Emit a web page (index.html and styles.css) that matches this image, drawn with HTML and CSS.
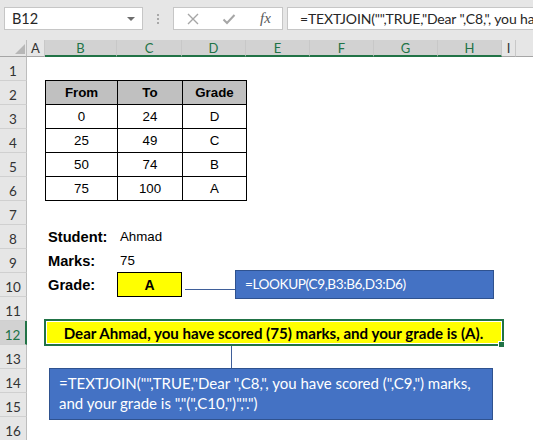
FILE: index.html
```html
<!DOCTYPE html>
<html>
<head>
<meta charset="utf-8">
<link rel="stylesheet" href="styles.css">
</head>
<body>
<div class="app">
  <div class="topbar">
    <div class="namebox"><span class="nb-text">B12</span><span class="nb-arrow"></span></div>
    <div class="sep"><span></span><span></span><span></span></div>
    <div class="fxbox">
      <svg class="ico" width="14" height="14" viewBox="0 0 14 14"><path d="M2 2 L12 12 M12 2 L2 12" stroke="#a6a6a6" stroke-width="1.4" fill="none"/></svg>
      <svg class="ico" width="14" height="14" viewBox="0 0 14 14"><path d="M1.5 7.5 L5 11 L12.5 3" stroke="#a6a6a6" stroke-width="2" fill="none"/></svg>
      <span class="fx">fx</span>
    </div>
    <div class="formula">=TEXTJOIN("",TRUE,"Dear ",C8,", you have scored (",C9,") marks, and your grade is ","(",C10,")",".")</div>
  </div>

  <div class="colheads">
    <div class="ch corner"><svg class="tri" width="10" height="10" viewBox="0 0 10 10"><polygon points="10,0 10,10 0,10" fill="#b7b7b7"/></svg></div>
    <div class="ch w-a">A</div>
    <div class="ch w-b sel">B</div>
    <div class="ch w-c sel">C</div>
    <div class="ch w-d sel">D</div>
    <div class="ch w-e sel">E</div>
    <div class="ch w-f sel">F</div>
    <div class="ch w-g sel">G</div>
    <div class="ch w-h sel">H</div>
    <div class="ch w-i">I</div>
    <div class="ch rest"></div>
  </div>

  <div class="body">
    <div class="rowheads">
      <div class="rh">1</div><div class="rh">2</div><div class="rh">3</div><div class="rh">4</div>
      <div class="rh">5</div><div class="rh">6</div><div class="rh">7</div><div class="rh">8</div>
      <div class="rh">9</div><div class="rh">10</div><div class="rh">11</div><div class="rh sel">12</div>
      <div class="rh">13</div><div class="rh">14</div><div class="rh">15</div><div class="rh">16</div>
    </div>
    <div class="sheet">
      <div class="gtable">
        <div class="tc th">From</div><div class="tc th">To</div><div class="tc th">Grade</div>
        <div class="tc">0</div><div class="tc">24</div><div class="tc">D</div>
        <div class="tc">25</div><div class="tc">49</div><div class="tc">C</div>
        <div class="tc">50</div><div class="tc">74</div><div class="tc">B</div>
        <div class="tc">75</div><div class="tc">100</div><div class="tc">A</div>
      </div>
      <div class="lbl r8">Student:</div>
      <div class="val r8">Ahmad</div>
      <div class="lbl r9">Marks:</div>
      <div class="val r9">75</div>
      <div class="lbl r10">Grade:</div>
      <div class="gradebox">A</div>
      <div class="merged">Dear Ahmad, you have scored (75) marks, and your grade is (A).</div>

      <div class="conn1"></div>
      <div class="shape lookup">=LOOKUP(C9,B3:B6,D3:D6)</div>
      <div class="selection"></div>
      <div class="handle"></div>
      <div class="conn2"></div>
      <div class="shape textjoin">=TEXTJOIN("",TRUE,"Dear ",C8,", you have scored (",C9,") marks,<br>and your grade is ","(",C10,")",".")</div>
    </div>
  </div>
</div>
</body>
</html>
```
FILE: styles.css
```css
html, body {
  margin: 0;
  padding: 0;
  background: #ffffff;
}
.app {
  width: 533px;
  height: 440px;
  overflow: hidden;
  position: relative;
  background: #ffffff;
  font-family: "Liberation Sans", Arial, sans-serif;
}

/* ---------- formula bar ---------- */
.topbar {
  height: 40px;
  box-sizing: border-box;
  background: #e6e6e6;
  display: flex;
  align-items: flex-start;
  padding: 7px 0 0 4px;
  font-family: Lato, "Noto Sans", sans-serif;
}
.namebox {
  width: 139px;
  height: 23px;
  box-sizing: border-box;
  background: #fff;
  border: 1px solid #c6c6c6;
  display: flex;
  align-items: center;
  justify-content: space-between;
  padding: 0 7px 0 7px;
  font-size: 14.5px;
  color: #262626;
  flex: none;
}
.nb-arrow {
  width: 0;
  height: 0;
  border-left: 4px solid transparent;
  border-right: 4px solid transparent;
  border-top: 4px solid #6d6d6d;
}
.sep {
  width: 30px;
  height: 23px;
  flex: none;
  display: flex;
  flex-direction: column;
  align-items: center;
  justify-content: center;
  gap: 2px;
}
.sep span {
  width: 2px;
  height: 2px;
  background: #a8a8a8;
}
.fxbox {
  width: 110px;
  height: 23px;
  box-sizing: border-box;
  flex: none;
  background: #fff;
  border: 1px solid #c6c6c6;
  display: flex;
  align-items: center;
  padding-left: 12px;
  gap: 22px;
}
.ico { display: block; flex: none; }
.fx {
  font-family: "Liberation Serif", serif;
  font-style: italic;
  font-size: 15px;
  color: #595959;
  margin-left: 2px;
}
.formula {
  margin-left: 4px;
  width: 300px;
  flex: none;
  height: 23px;
  box-sizing: border-box;
  background: #fff;
  border: 1px solid #c6c6c6;
  padding-left: 12px;
  font-size: 14px;
  letter-spacing: -0.15px;
  line-height: 21px;
  color: #262626;
  white-space: nowrap;
  overflow: hidden;
}

/* ---------- column headers ---------- */
.colheads {
  display: flex;
  height: 17px;
  background: #e6e6e6;
  font-family: Lato, "Noto Sans", sans-serif;
  font-size: 13px;
  color: #333;
}
.ch {
  flex: none;
  box-sizing: border-box;
  height: 17px;
  border-right: 1px solid #c8c8c8;
  border-bottom: 1px solid #a6a6a6;
  text-align: center;
  line-height: 16px;
}
.ch.sel {
  background: #d2d2d2;
  color: #217346;
  border-bottom: 2px solid #217346;
}
.corner { width: 27px; position: relative; border-right: 1px solid #bdbdbd; }
.tri { position: absolute; left: 15px; top: 4px; }
.w-a { width: 18px; }
.w-b { width: 72px; }
.w-c { width: 65px; }
.w-d { width: 64px; }
.w-e { width: 64px; }
.w-f { width: 64px; }
.w-g { width: 64px; }
.w-h { width: 64px; }
.w-i { width: 14px; }
.rest { flex: 1; border-right: none; }

/* ---------- body ---------- */
.body {
  display: flex;
}
.rowheads {
  width: 27px;
  flex: none;
  background: #e6e6e6;
  font-family: Lato, "Noto Sans", sans-serif;
  font-size: 13.5px;
  color: #333;
}
.rh {
  height: 24px;
  box-sizing: border-box;
  border-bottom: 1px solid #d0d0d0;
  border-right: 1px solid #bdbdbd;
  text-align: center;
  line-height: 24px;
  padding-top: 2px;
}
.rh.sel {
  background: #d2d2d2;
  color: #217346;
  border-right: 2px solid #217346;
}
.sheet {
  flex: 1;
  position: relative;
  display: grid;
  grid-template-columns: 18px 72px 65px 64px 64px 64px 64px 64px 14px 1fr;
  grid-template-rows: repeat(16, 24px);
}

/* lookup table */
.gtable {
  grid-column: 2 / 5;
  grid-row: 2 / 7;
  margin-top: -1px;
  margin-right: -1px;
  display: grid;
  grid-template-columns: 71px 64px 63px;
  grid-template-rows: repeat(5, 23px);
  gap: 1px;
  padding: 1px;
  background: #000;
}
.tc {
  background: #fff;
  text-align: center;
  font-size: 13.3px;
  line-height: 23px;
  color: #000;
}
.tc.th {
  background: #c0c0c0;
  font-weight: bold;
}

/* student block */
.lbl {
  grid-column: 2;
  font-weight: bold;
  font-size: 14.67px;
  line-height: 24px;
  padding-left: 3px;
  white-space: nowrap;
  color: #000;
}
.val {
  grid-column: 3;
  font-size: 13.3px;
  line-height: 24px;
  padding-left: 3px;
  color: #000;
}
.r8 { grid-row: 8; }
.r9 { grid-row: 9; }
.r10 { grid-row: 10; }
.gradebox {
  grid-column: 3;
  grid-row: 10;
  margin-top: -1px;
  height: 25px;
  box-sizing: border-box;
  background: #ffff00;
  border: 1px solid #000;
  text-align: center;
  font-weight: bold;
  font-size: 14px;
  line-height: 24px;
  color: #000;
}
.merged {
  grid-column: 2 / 9;
  grid-row: 12;
  background: #ffff00;
  text-align: center;
  font-family: Lato, "Noto Sans", sans-serif;
  font-weight: bold;
  font-size: 15.1px;
  line-height: 24px;
  color: #000;
  white-space: nowrap;
}

/* floating shapes */
.conn1 {
  position: absolute;
  left: 158px;
  top: 232px;
  width: 50px;
  height: 1px;
  background: #3f5f99;
}
.conn2 {
  position: absolute;
  left: 204px;
  top: 289px;
  width: 1px;
  height: 22px;
  background: #3f5f99;
}
.shape {
  position: absolute;
  box-sizing: border-box;
  background: #4472c4;
  border: 1px solid #2f528f;
  color: #fff;
  font-family: Lato, "Noto Sans", sans-serif;
  white-space: nowrap;
}
.lookup {
  left: 208px;
  top: 213px;
  width: 259px;
  height: 29px;
  padding-left: 9px;
  font-size: 13.6px;
  letter-spacing: -0.4px;
  line-height: 27px;
}
.textjoin {
  left: 22px;
  top: 311px;
  width: 444px;
  height: 52px;
  padding: 4px 0 0 9px;
  font-size: 15px;
  line-height: 20px;
}
.selection {
  position: absolute;
  left: 17px;
  top: 262px;
  width: 460px;
  height: 27px;
  box-sizing: border-box;
  border: 2px solid #217346;
  box-shadow: inset 0 0 0 1px #ffffff;
}
.handle {
  position: absolute;
  left: 471px;
  top: 284px;
  width: 5px;
  height: 5px;
  background: #217346;
  border: 1px solid #ffffff;
}
```
